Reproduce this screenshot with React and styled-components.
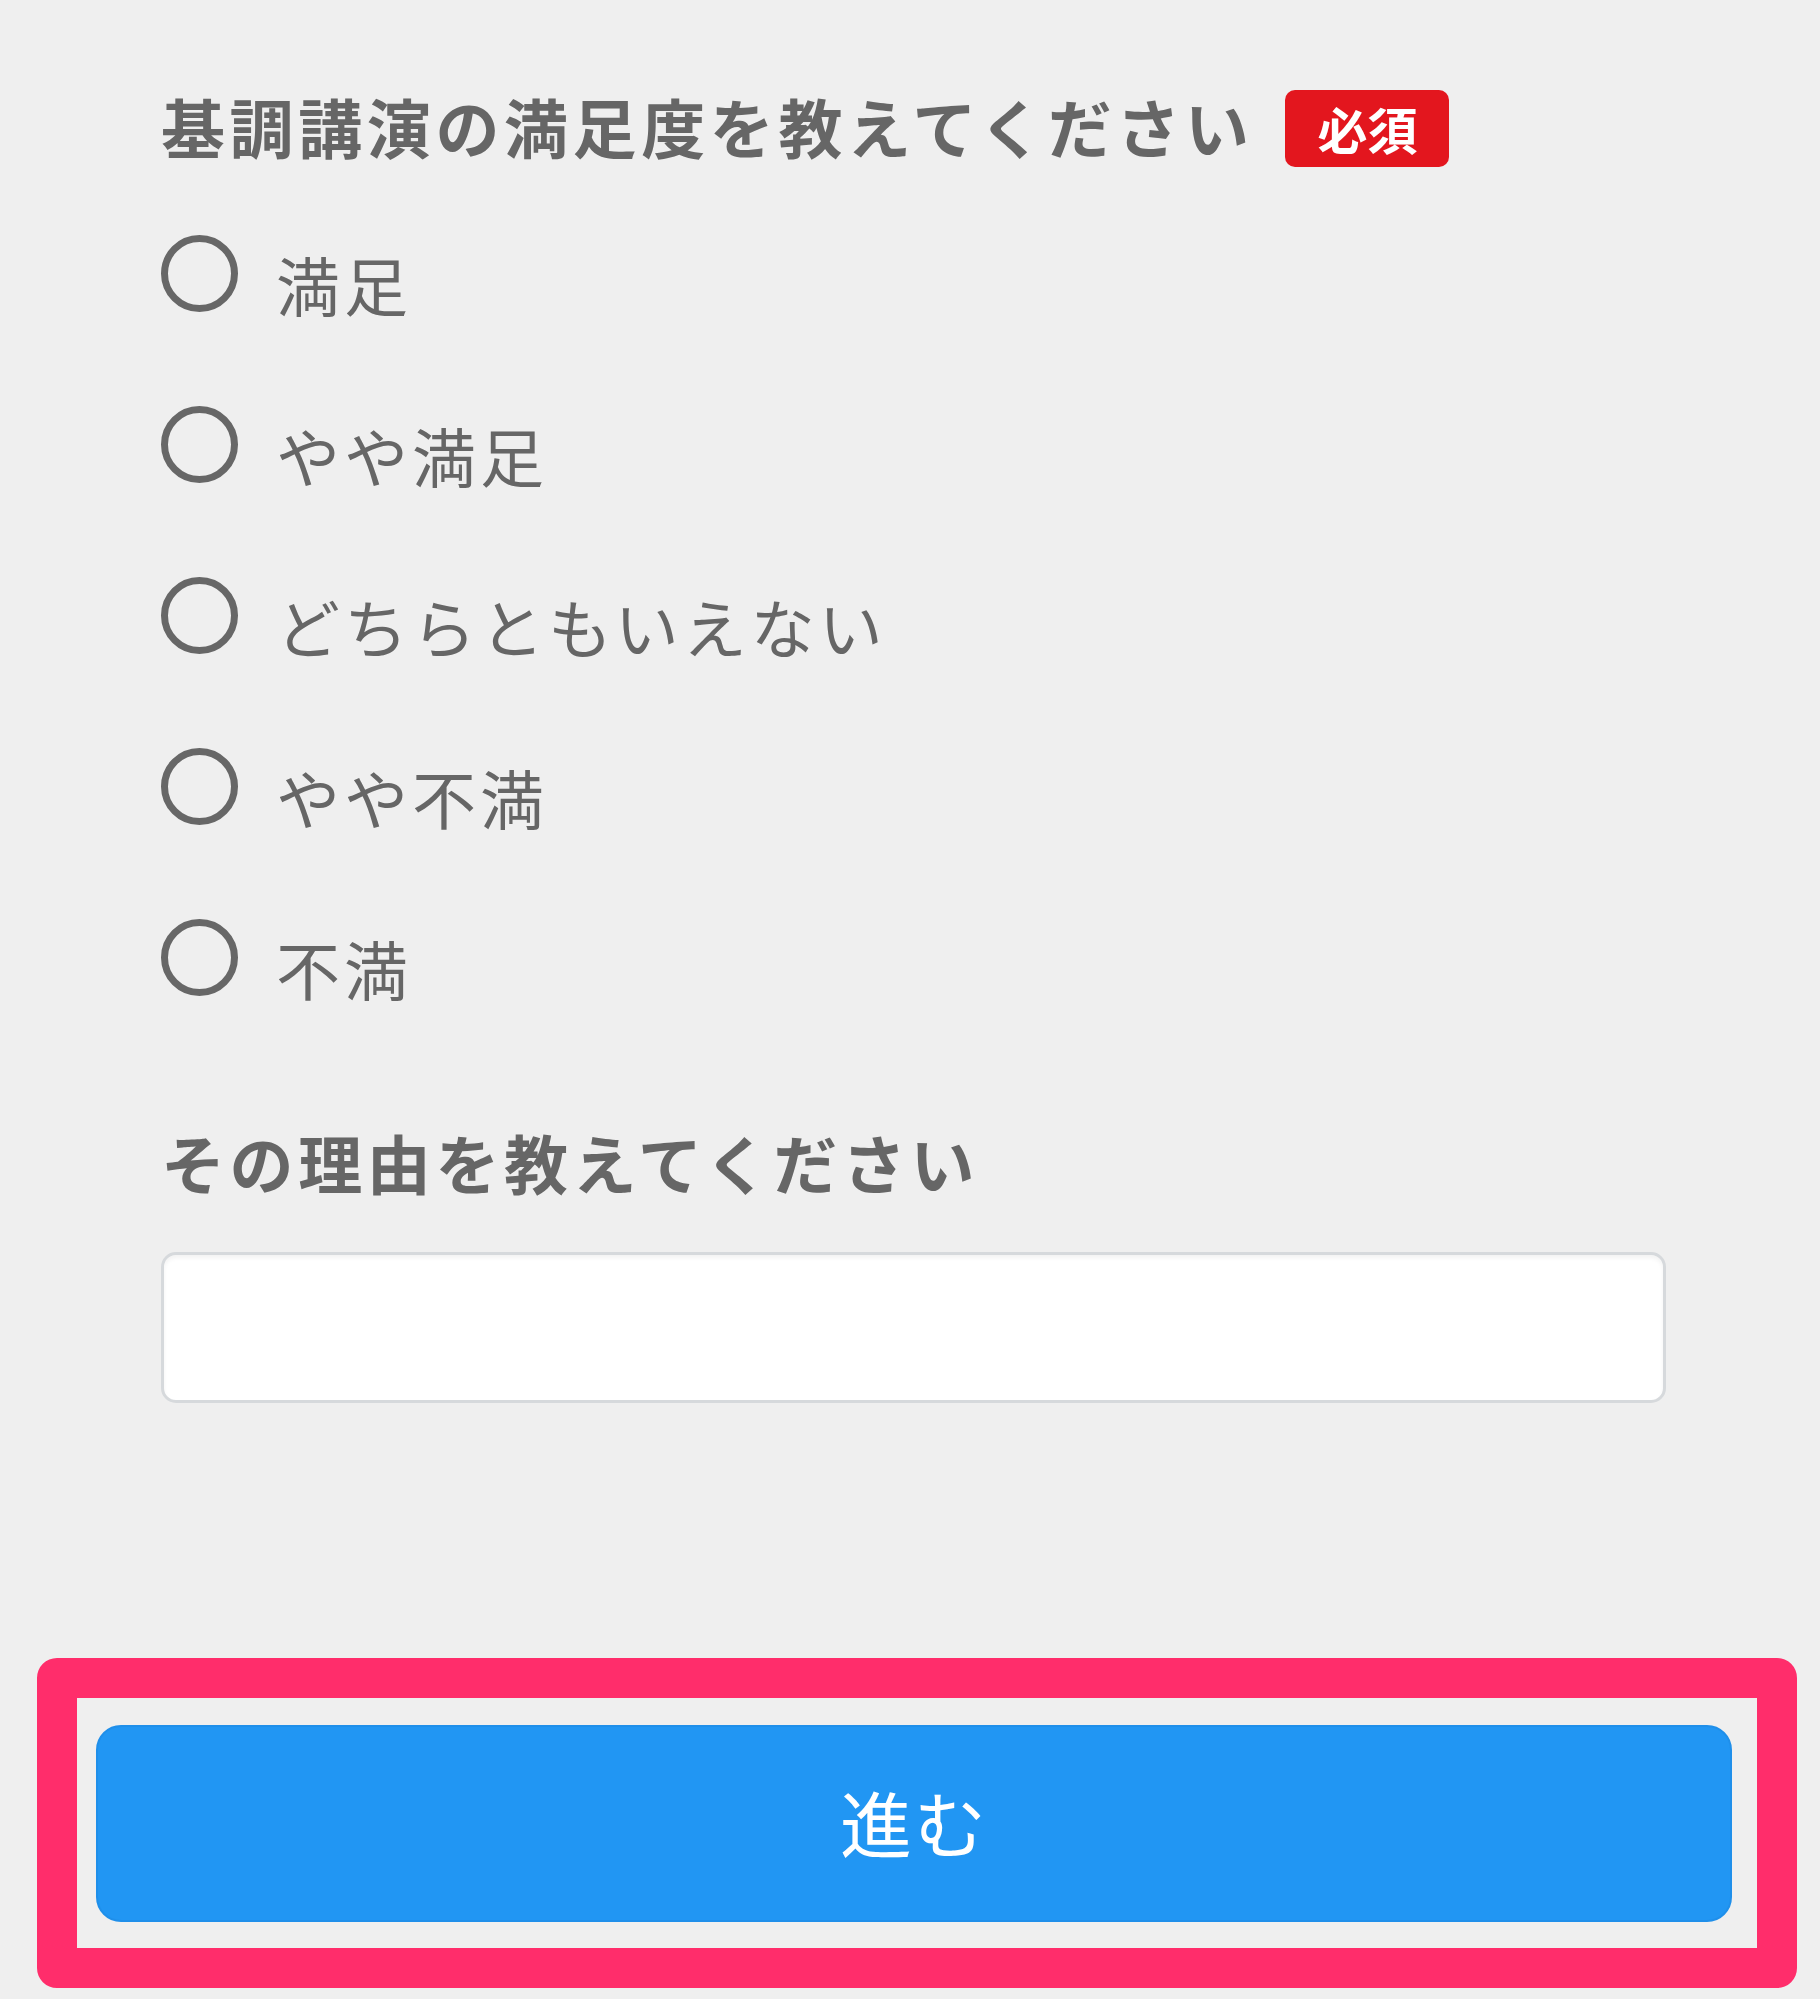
import React from "react";
import styled, { createGlobalStyle } from "styled-components";

const GlobalStyle = createGlobalStyle`
  html, body {
    margin: 0;
    padding: 0;
    background: #efefef;
  }
  body {
    font-family: "Noto Sans CJK JP", "Noto Sans", sans-serif;
    color: #666666;
  }
  * { box-sizing: border-box; }
`;

const Page = styled.div`
  width: 1820px;
  min-height: 1999px;
  background: #efefef;
  padding-bottom: 11px;
  display: flex;
  flex-direction: column;
`;

const Form = styled.form`
  padding: 90px 0 0 161px;
  display: flex;
  flex-direction: column;
`;

const QuestionHeader = styled.div`
  display: flex;
  align-items: center;
  height: 77px;
`;

const QuestionTitle = styled.h2`
  margin: 0 0 7px 0;
  font-size: 64px;
  line-height: 64px;
  font-weight: 700;
  letter-spacing: 4.6px;
  color: #666666;
`;

const RequiredBadge = styled.span`
  margin-left: 32px;
  height: 77px;
  padding: 0 32px;
  border-radius: 10px;
  background: #e3161e;
  color: #ffffff;
  font-size: 50px;
  line-height: 77px;
  font-weight: 700;
`;

const OptionList = styled.div`
  margin-top: 68px;
  display: flex;
  flex-direction: column;
  gap: 90px;
`;

const OptionRow = styled.label`
  display: flex;
  align-items: flex-start;
  gap: 38px;
  height: 81px;
  cursor: pointer;
`;

const RadioCircle = styled.input.attrs({ type: "radio" })`
  appearance: none;
  -webkit-appearance: none;
  margin: 0;
  flex: none;
  width: 77px;
  height: 77px;
  border: 7px solid #676767;
  border-radius: 50%;
  background: transparent;
`;

const OptionText = styled.span`
  margin-top: 16px;
  font-size: 64px;
  line-height: 64px;
  font-weight: 400;
  letter-spacing: 4px;
  color: #666666;
`;

const SubLabel = styled.label`
  margin-top: 129px;
  font-size: 64px;
  line-height: 64px;
  font-weight: 700;
  letter-spacing: 4.6px;
  color: #666666;
`;

const ReasonInput = styled.input.attrs({ type: "text" })`
  margin-top: 59px;
  width: 1505px;
  height: 151px;
  border: 3px solid #d6d9dc;
  border-radius: 15px;
  background: #ffffff;
  box-shadow: inset 0 3px 4px rgba(0, 0, 0, 0.05);
  outline: none;
  font-size: 56px;
  padding: 0 24px;
`;

const Footer = styled.div`
  margin: 255px 0 0 37px;
  width: 1760px;
  border: 40px solid #ff2d6b;
  border-radius: 20px;
  padding: 27px 25px 26px 19px;
`;

const NextButton = styled.button`
  display: block;
  width: 100%;
  height: 197px;
  border: 2px solid #1f8fea;
  border-radius: 25px;
  background: #2196f3;
  color: #ffffff;
  font-family: "Noto Sans CJK JP", "Noto Sans", sans-serif;
  font-size: 72px;
  line-height: 72px;
  font-weight: 400;
  letter-spacing: 2px;
  padding: 0 0 6px 0;
  cursor: pointer;
`;

const options = ["満足", "やや満足", "どちらともいえない", "やや不満", "不満"];

export default function App() {
  return (
    <>
      <GlobalStyle />
      <Page>
        <Form onSubmit={(e) => e.preventDefault()}>
          <QuestionHeader>
            <QuestionTitle>基調講演の満足度を教えてください</QuestionTitle>
            <RequiredBadge>必須</RequiredBadge>
          </QuestionHeader>
          <OptionList>
            {options.map((opt) => (
              <OptionRow key={opt}>
                <RadioCircle name="satisfaction" value={opt} />
                <OptionText>{opt}</OptionText>
              </OptionRow>
            ))}
          </OptionList>
          <SubLabel htmlFor="reason">その理由を教えてください</SubLabel>
          <ReasonInput id="reason" />
        </Form>
        <Footer>
          <NextButton type="button">進む</NextButton>
        </Footer>
      </Page>
    </>
  );
}
